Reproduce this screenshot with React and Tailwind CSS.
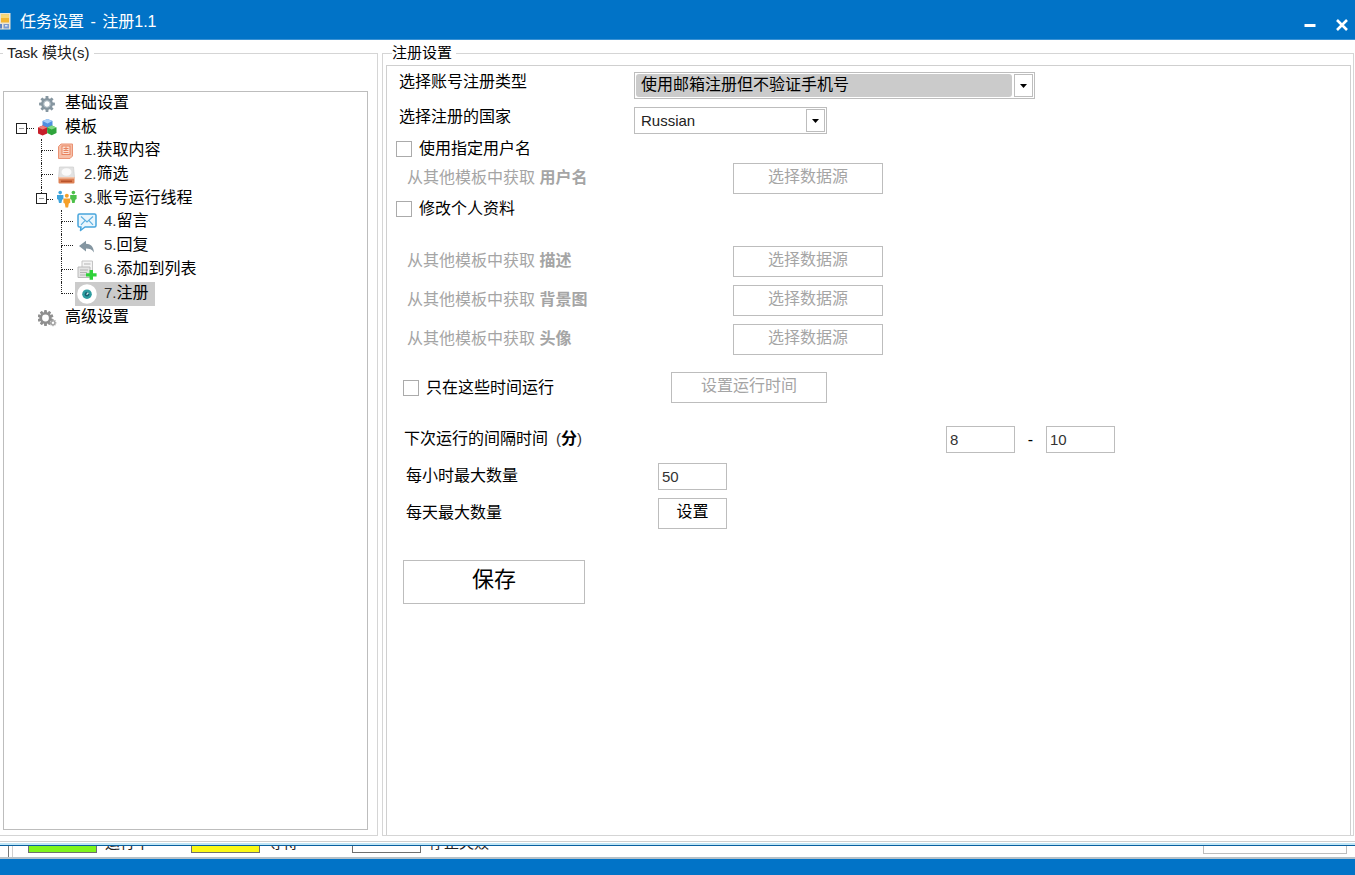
import React from "react";

const FONT = "font-['Liberation_Sans','Noto_Sans_CJK_SC',sans-serif]";

/* ---------- icons ---------- */

function AppIcon() {
  return (
    <svg width="11" height="17" viewBox="0 0 11 17" aria-hidden="true">
      <rect x="-6" y="0" width="16.5" height="16.5" fill="#e9e4d6" />
      <rect x="-5" y="1" width="4" height="8" fill="#f1c644" />
      <rect x="1" y="1.5" width="8" height="8" fill="#f2b632" />
      <rect x="1" y="1.5" width="8" height="3.5" fill="#f8d877" />
      <rect x="-5" y="11" width="7" height="4.5" fill="#5d84c4" />
      <rect x="3.5" y="11" width="5.5" height="4.5" fill="#7a9ad0" />
      <rect x="5" y="12" width="2.5" height="1.5" fill="#d8e3f5" />
    </svg>
  );
}

function Gear({ cx, cy, r, hole, color, teeth }) {
  const step = 360 / teeth;
  return (
    <g fill={color}>
      {Array.from({ length: teeth }, (_, i) => (
        <rect
          key={i}
          x={cx - r * 0.24}
          y={cy - r * 1.32}
          width={r * 0.48}
          height={r * 0.6}
          rx={r * 0.08}
          transform={`rotate(${i * step} ${cx} ${cy})`}
        />
      ))}
      <circle cx={cx} cy={cy} r={(r + hole) / 2} fill="none" stroke={color} strokeWidth={r - hole} />
    </g>
  );
}

function GearIcon() {
  return (
    <svg width="20" height="20" viewBox="0 0 20 20" aria-hidden="true">
      <Gear cx={9} cy={10} r={6} hole={2.9} color="#8696a0" teeth={8} />
      <circle cx="9" cy="10" r="3.4" fill="none" stroke="#b5c1c9" strokeWidth="1" />
    </svg>
  );
}

function GearsIcon() {
  return (
    <svg width="20" height="20" viewBox="0 0 20 20" aria-hidden="true">
      <Gear cx={7.5} cy={10} r={6} hole={3.4} color="#8f8f8f" teeth={10} />
      <Gear cx={15} cy={14.8} r={2.6} hole={1.2} color="#a6a6a6" teeth={8} />
    </svg>
  );
}

function CubesIcon() {
  return (
    <svg width="20" height="20" viewBox="0 0 20 20" aria-hidden="true">
      <path d="M4.5 3 L9.5 1 L14.5 3 V10 L9.5 12 L4.5 10Z" fill="#4f8fe0" />
      <path d="M4.5 3 L9.5 1 L14.5 3 L9.5 5.5Z" fill="#a3cdf8" />
      <path d="M0 9.5 L4.6 7.5 L9.2 9.5 V15.5 L4.6 17.6 L0 15.5Z" fill="#c71f2a" />
      <path d="M0 9.5 L4.6 7.5 L9.2 9.5 L4.6 11.4Z" fill="#ee7a77" />
      <path d="M9.2 9.5 L13.7 7.5 L18.5 9.5 V15 L13.7 17.2 L9.2 15Z" fill="#2fa43c" />
      <path d="M9.2 9.5 L13.7 7.5 L18.5 9.5 L13.7 11.4Z" fill="#82d983" />
    </svg>
  );
}

function NoteIcon() {
  return (
    <svg width="20" height="20" viewBox="0 0 20 20" aria-hidden="true">
      <path d="M4 3 H15.5 V15 L13 17.5 H1.5 V5.5Z" fill="#f6bfa8" stroke="#ea9273" strokeWidth="1" />
      <rect x="5" y="5" width="8" height="8.5" fill="#fbe0d3" stroke="#e8835f" strokeWidth="1" />
      <path d="M6.5 7.5 H11.5 M6.5 9.5 H11.5 M6.5 11.5 H11.5 M9 5.5 V9.5" stroke="#e8835f" strokeWidth="1" fill="none" />
    </svg>
  );
}

function FilterDriveIcon() {
  return (
    <svg width="20" height="20" viewBox="0 0 20 20" aria-hidden="true">
      <path d="M2.5 2 H16.5 L17.5 12.5 H1.5Z" fill="#e2e2e2" stroke="#cfcfcf" strokeWidth="0.7" />
      <ellipse cx="9.5" cy="7" rx="5" ry="3.8" fill="#fafafa" />
      <path d="M1.5 12.5 H17.5 V17.5 Q17.5 18.5 16.5 18.5 H2.5 Q1.5 18.5 1.5 17.5Z" fill="#dd8155" />
      <rect x="1.5" y="12" width="16" height="1.6" fill="#f4c3a7" />
      <rect x="4" y="15.5" width="11" height="1.6" fill="#b9532c" />
    </svg>
  );
}

function PeopleIcon() {
  return (
    <svg width="20" height="20" viewBox="0 0 20 20" aria-hidden="true">
      <g fill="#3fa4dc">
        <circle cx="3.2" cy="3.6" r="1.8" />
        <path d="M0 6 H6.4 V10 L5.1 10.7 L4.4 14 H2 L1.3 10.7 L0 10Z" />
      </g>
      <g fill="#4cc04a">
        <circle cx="16.4" cy="3.6" r="1.8" />
        <path d="M13.2 6 H19.6 V10 L18.3 10.7 L17.6 14 H15.2 L14.5 10.7 L13.2 10Z" />
      </g>
      <g fill="#f5a02a">
        <circle cx="9.8" cy="6.8" r="2" />
        <path d="M6.4 9.4 H13.2 V13.8 L11.8 14.6 L11.1 18.4 H8.5 L7.8 14.6 L6.4 13.8Z" />
      </g>
    </svg>
  );
}

function MailIcon() {
  return (
    <svg width="20" height="20" viewBox="0 0 20 20" aria-hidden="true">
      <path
        d="M2.5 2 H17.5 Q19 2 19 3.5 V13.5 Q19 15 17.5 15 H8 L3.5 18.5 L4 15 H2.5 Q1 15 1 13.5 V3.5 Q1 2 2.5 2Z"
        fill="#eaf6fd"
        stroke="#48a5dc"
        strokeWidth="1.5"
        strokeLinejoin="round"
      />
      <path d="M4 4.5 L10 10 L16 4.5 M4 12.8 L8 8.6 M16 12.8 L12 8.6" fill="none" stroke="#5fb0e0" strokeWidth="1.2" />
    </svg>
  );
}

function ReplyIcon() {
  return (
    <svg width="20" height="20" viewBox="0 0 20 20" aria-hidden="true">
      <path d="M2 10 L9 4.8 V7.8 C13.5 7.8 16.5 10.5 17 16.5 C15 13.5 12.5 12.6 9 12.6 V15.4Z" fill="#8496a1" />
    </svg>
  );
}

function AddListIcon() {
  return (
    <svg width="20" height="20" viewBox="0 0 20 20" aria-hidden="true">
      <path d="M5 1 H15.5 V12 H5Z" fill="#f4f4f4" stroke="#c4c4c4" strokeWidth="1" />
      <path d="M1 7 H13 V17.5 H1Z" fill="#e4e4e4" stroke="#bababa" strokeWidth="1" />
      <path d="M7 4 H13.5 M3 10 H11 M3 12.5 H10 M3 15 H9" stroke="#b3b3b3" strokeWidth="1" />
      <path d="M12.6 10 H16 V13.2 H19.6 V16.5 H16 V19.7 H12.6 V16.5 H9 V13.2 H12.6Z" fill="#2fd23a" />
    </svg>
  );
}

function RegisterIcon() {
  return (
    <svg width="20" height="20" viewBox="0 0 20 20" aria-hidden="true">
      <circle cx="10" cy="10" r="9.8" fill="#ffffff" />
      <circle cx="10" cy="10.2" r="4.8" fill="#2c9c9f" />
      <circle cx="10" cy="10.2" r="2.2" fill="#155f70" />
      <path d="M9.6 10.6 L11.4 8.8" stroke="#d8f3f1" strokeWidth="1.3" />
    </svg>
  );
}

/* ---------- tree ---------- */

function Expander() {
  return (
    <button
      type="button"
      aria-label="折叠"
      className="flex h-[11px] w-[11px] shrink-0 items-center justify-center border border-[#222] bg-white"
    >
      <span className="h-px w-[5px] bg-[#999]" />
    </button>
  );
}

function Branch({ last }) {
  return (
    <span className="flex h-6 w-3 shrink-0 flex-col">
      <span className="h-3 border-b border-l border-dotted border-[#222]" />
      {!last && <span className="h-3 border-l border-dotted border-[#222]" />}
    </span>
  );
}

function Node({ icon, num, label, selected }) {
  return (
    <button
      type="button"
      className={
        "ml-0.5 flex h-6 items-center gap-[7px] whitespace-nowrap pl-0.5 pr-1.5 " + (selected ? "bg-[#cbcbcb]" : "")
      }
    >
      <span className="flex w-5 shrink-0">{icon}</span>
      <span className="flex items-baseline pb-[3px] leading-5">
        {num && <span className="text-[15px] text-[#333]">{num}</span>}
        {label}
      </span>
    </button>
  );
}

const steps = [
  { num: "4.", label: "留言", icon: <MailIcon /> },
  { num: "5.", label: "回复", icon: <ReplyIcon /> },
  { num: "6.", label: "添加到列表", icon: <AddListIcon /> },
  { num: "7.", label: "注册", icon: <RegisterIcon />, selected: true },
];

function Tree() {
  return (
    <ul className="flex-1 border border-[#bdbdbd] bg-white text-base text-black">
      <li className="pl-[30px]">
        <Node icon={<GearIcon />} label="基础设置" />
      </li>
      <li>
        <div className="flex h-6 items-center pl-3">
          <Expander />
          <span className="w-[7px] border-t border-dotted border-[#222]" />
          <Node icon={<CubesIcon />} label="模板" />
        </div>
        <ul className="-mt-px ml-[37px]">
          <li className="flex">
            <Branch />
            <Node icon={<NoteIcon />} num="1." label="获取内容" />
          </li>
          <li className="flex">
            <Branch />
            <Node icon={<FilterDriveIcon />} num="2." label="筛选" />
          </li>
          <li>
            <div className="-ml-[5px] flex h-6 items-center">
              <span className="flex h-6 flex-col items-center">
                <span className="h-[6px] border-l border-dotted border-[#222]" />
                <Expander />
              </span>
              <span className="w-[6px] border-t border-dotted border-[#222]" />
              <Node icon={<PeopleIcon />} num="3." label="账号运行线程" />
            </div>
            <ul className="-mt-px ml-5">
              {steps.map((s, i) => (
                <li key={s.num} className="flex">
                  <Branch last={i === steps.length - 1} />
                  <Node {...s} />
                </li>
              ))}
            </ul>
          </li>
        </ul>
      </li>
      <li className="pl-[30px]">
        <Node icon={<GearsIcon />} label="高级设置" />
      </li>
    </ul>
  );
}

/* ---------- form ---------- */

function DropDown({ id, wide, options }) {
  return (
    <div className={"flex h-[27px] gap-0.5 border border-[#bdbdbd] bg-white p-px " + (wide ? "w-[401px]" : "w-[193px]")}>
      <select
        id={id}
        className={
          "min-w-0 flex-1 appearance-none rounded-[3px] pl-[5px] outline-none " +
          (wide ? "bg-[#cbcbcb] pb-0.5 text-base leading-5" : "bg-white text-[15px] leading-5 text-[#222]")
        }
      >
        {options.map((o) => (
          <option key={o}>{o}</option>
        ))}
      </select>
      <span className="flex w-[19px] items-center justify-center border border-[#bdbdbd]">
        <svg width="7" height="4" viewBox="0 0 7 4" aria-hidden="true">
          <path d="M0 0 H7 L3.5 4Z" fill="#000" />
        </svg>
      </span>
    </div>
  );
}

function Check({ id, label }) {
  return (
    <div className="flex h-4 items-center gap-[7px]">
      <input
        id={id}
        type="checkbox"
        className="h-4 w-4 shrink-0 appearance-none border border-[#ababab] bg-white checked:bg-[#0173c7]"
      />
      <label htmlFor={id} className="leading-4">
        {label}
      </label>
    </div>
  );
}

function PlainButton({ children, className, disabled }) {
  return (
    <button
      type="button"
      disabled={disabled}
      className={
        "flex items-center justify-center border border-[#bdbdbd] bg-white pb-1 disabled:text-[#a5a5a5] " + className
      }
    >
      {children}
    </button>
  );
}

function SourceRow({ name }) {
  return (
    <div className="flex h-[31px] items-center pl-[20px]">
      <span className="w-[326px] pb-0.5 text-[#a5a5a5]">
        从其他模板中获取 <b>{name}</b>
      </span>
      <PlainButton disabled className="h-[31px] w-[150px]">
        选择数据源
      </PlainButton>
    </div>
  );
}

function NumberBox({ id, value, label }) {
  return (
    <input
      id={id}
      type="text"
      aria-label={label}
      defaultValue={value}
      className="h-[27px] w-[69px] border border-[#bdbdbd] bg-white pl-[3px] text-[15px] text-[#333] outline-none"
    />
  );
}

function SettingsForm() {
  return (
    <form className="flex flex-1 flex-col border border-b-0 border-[#cfcfcf] pt-1.5 text-base leading-5 text-black">
      <div className="flex items-start pl-[12px]">
        <label htmlFor="regType" className="w-[235px]">
          选择账号注册类型
        </label>
        <DropDown id="regType" wide options={["使用邮箱注册但不验证手机号"]} />
      </div>
      <div className="mt-2 flex items-start pl-[12px]">
        <label htmlFor="country" className="w-[235px]">
          选择注册的国家
        </label>
        <DropDown id="country" options={["Russian"]} />
      </div>

      <div className="mt-[7px] pl-[9px]">
        <Check id="useName" label="使用指定用户名" />
      </div>
      <div className="mt-1.5">
        <SourceRow name="用户名" />
      </div>
      <div className="mt-[7px] pl-[9px]">
        <Check id="editProfile" label="修改个人资料" />
      </div>

      <div className="mt-[29px] flex flex-col gap-2">
        <SourceRow name="描述" />
        <SourceRow name="背景图" />
        <SourceRow name="头像" />
      </div>

      <div className="mt-[17px] flex items-center pl-4">
        <div className="w-[268px]">
          <Check id="onlyTimes" label="只在这些时间运行" />
        </div>
        <PlainButton disabled className="h-[31px] w-[156px]">
          设置运行时间
        </PlainButton>
      </div>

      <div className="mt-[23px] flex items-center pl-[17px]">
        <label htmlFor="gapMin" className="w-[542px] pb-0.5">
          下次运行的间隔时间
          <span className="ml-2">
            <span className="text-[15px] text-[#333]">(</span>
            <b>分</b>
            <span className="text-[15px] text-[#333]">)</span>
          </span>
        </label>
        <NumberBox id="gapMin" value="8" />
        <span className="w-[31px] text-center">-</span>
        <NumberBox id="gapMax" value="10" label="最大间隔时间" />
      </div>
      <div className="mt-2.5 flex items-center pl-[19px]">
        <label htmlFor="perHour" className="w-[252px] pb-0.5">
          每小时最大数量
        </label>
        <NumberBox id="perHour" value="50" />
      </div>
      <div className="mt-2 flex items-center pl-[19px]">
        <span className="w-[252px] pb-0.5">每天最大数量</span>
        <PlainButton className="h-[31px] w-[69px]">设置</PlainButton>
      </div>

      <div className="mt-[31px] pl-4">
        <PlainButton className="h-11 w-[182px] text-[22px]">保存</PlainButton>
      </div>
    </form>
  );
}

/* ---------- status legend ---------- */

function Status({ color, label }) {
  return (
    <div className="flex items-start gap-2">
      <span className={"h-[7px] w-[69px] border border-t-0 border-[#6f6f6f] " + color} />
      <span className="flex h-[5px] items-end overflow-hidden whitespace-nowrap text-[15px] leading-[17px] text-[#222]">
        {label}
      </span>
    </div>
  );
}

export default function App() {
  return (
    <div className={"flex min-h-screen flex-col bg-white text-base " + FONT}>
      <header className="flex h-10 items-center border-b border-[#3b92d4] bg-[#0173c7] pt-1 text-white">
        <AppIcon />
        <h1 className="ml-[9px] flex-1 text-base leading-5">
          任务设置 <span className="mx-0.5">-</span> 注册1.1
        </h1>
        <button type="button" aria-label="最小化" className="mt-1.5 flex h-5 w-8 items-center justify-center">
          <svg width="12" height="12" viewBox="0 0 12 12" aria-hidden="true">
            <path d="M0.5 6.5 H11.5" stroke="#fff" strokeWidth="3" />
          </svg>
        </button>
        <button type="button" aria-label="关闭" className="mr-[-3px] mt-1.5 flex h-5 w-8 items-center justify-center">
          <svg width="12" height="12" viewBox="0 0 12 12" aria-hidden="true">
            <path d="M1 1 L11 11 M11 1 L1 11" stroke="#fff" strokeWidth="2.6" />
          </svg>
        </button>
      </header>

      <main className="flex flex-1 gap-1 pb-[5px] pr-px pt-[3px]">
        <fieldset className="flex w-[378px] shrink-0 flex-col border border-l-0 border-[#d5d5d5] pb-[5px] pl-[3px] pr-[9px] pt-7">
          <legend className="whitespace-nowrap pl-1 pr-1 text-[15px] leading-5 text-[#222]">Task 模块(s)</legend>
          <Tree />
        </fieldset>
        <fieldset className="flex min-w-0 flex-1 flex-col border border-[#d5d5d5] pl-[3px] pr-0.5 pt-0.5">
          <legend className="ml-1.5 whitespace-nowrap pr-1 text-[15px] leading-5 text-black">注册设置</legend>
          <SettingsForm />
        </fieldset>
      </main>

      <div className="h-1 border-b-2 border-t border-b-[#bfe6f7] border-t-[#cfcfcf]" />
      <footer className="flex h-[14px] items-start overflow-hidden border-b-2 border-t border-b-[#b4c0c8] border-t-[#0a5f9e] pr-2">
        <span className="mr-[15px] flex h-full w-[13px] border-r border-[#cfcfcf]">
          <span className="h-full w-[9px] border-r border-[#777]" />
        </span>
        <div className="flex flex-1 items-start">
          <div className="w-[163px]">
            <Status color="bg-[#7ff51b]" label="运行中" />
          </div>
          <div className="w-[161px]">
            <Status color="bg-[#fbf915]" label="等待" />
          </div>
          <Status color="bg-white" label="停止失败" />
        </div>
        <span className="h-2 w-[144px] border border-t-0 border-[#bdbdbd]" />
      </footer>
      <div className="h-4 bg-[#0173c7]" />
    </div>
  );
}
